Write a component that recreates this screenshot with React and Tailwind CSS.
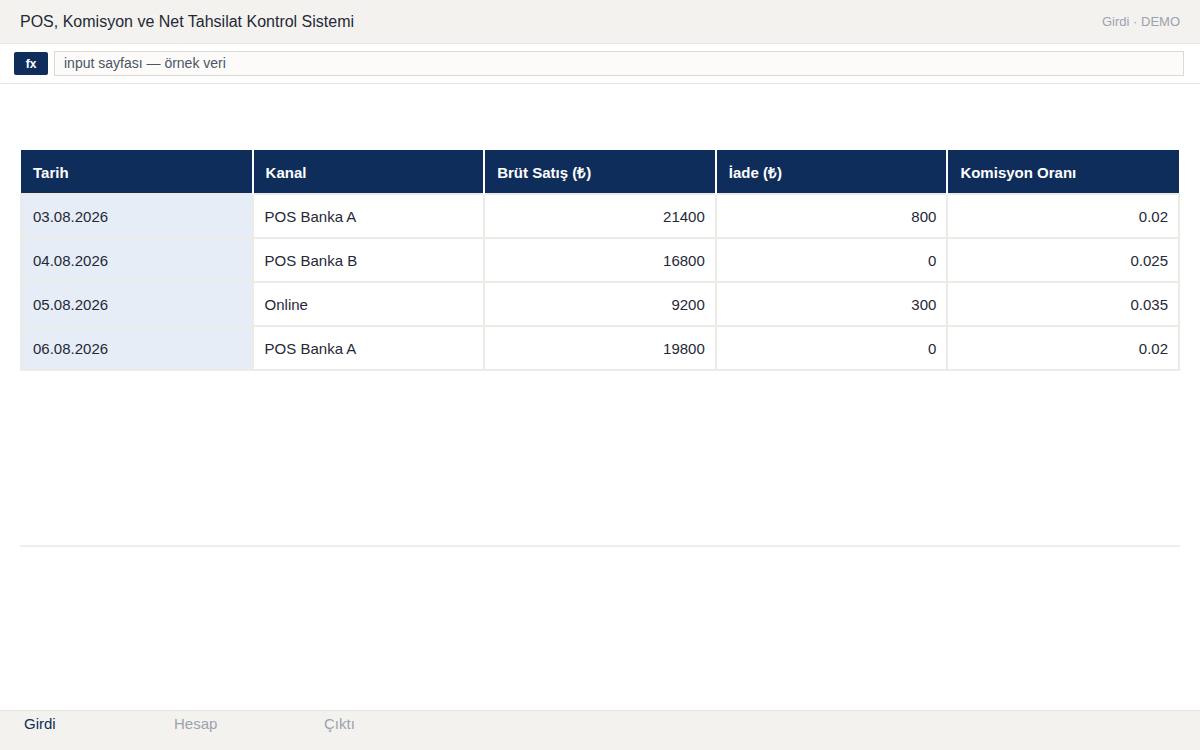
import React from 'react';

const rows = [
  { tarih: '03.08.2026', kanal: 'POS Banka A', brut: '21400', iade: '800', oran: '0.02' },
  { tarih: '04.08.2026', kanal: 'POS Banka B', brut: '16800', iade: '0', oran: '0.025' },
  { tarih: '05.08.2026', kanal: 'Online', brut: '9200', iade: '300', oran: '0.035' },
  { tarih: '06.08.2026', kanal: 'POS Banka A', brut: '19800', iade: '0', oran: '0.02' },
];

const headers = ['Tarih', 'Kanal', 'Brüt Satış (₺)', 'İade (₺)', 'Komisyon Oranı'];

const App = () => {
  return (
    <div className="h-screen w-full flex flex-col bg-white text-[#1f2937]" style={{ fontFamily: '"Liberation Sans", Arial, sans-serif' }}>
      {/* title bar */}
      <div className="h-[44px] flex items-center justify-between px-5 bg-[#f3f2ee] border-b border-[#e6e4de]">
        <h1 className="text-[16px] text-[#1f2937]">POS, Komisyon ve Net Tahsilat Kontrol Sistemi</h1>
        <span className="text-[13px] text-[#9ca3af]">Girdi · DEMO</span>
      </div>

      {/* formula bar */}
      <div className="h-[40px] flex items-center gap-[6px] pl-[14px] pr-4 border-b border-[#e6e4de]">
        <div className="w-[34px] h-[23px] bg-[#0f2d5a] rounded-[2px] flex items-center justify-center text-white text-[12px] font-bold">fx</div>
        <div className="flex-1 h-[25px] flex items-center px-[9px] bg-[#fcfbf9] border border-[#dcd9d2] text-[14px] text-[#4b5563]">
          input sayfası — örnek veri
        </div>
      </div>

      <div className="flex-1 px-5 pt-[66px] flex flex-col">
        <table className="w-full border-collapse table-fixed text-[15px]">
          <thead>
            <tr className="h-[44px] bg-[#0f2d5a] text-white">
              {headers.map((h, i) => (
                <th key={h} className={`text-left font-bold px-3 pt-[4px] ${i > 0 ? 'border-l-2 border-white' : ''}`}>{h}</th>
              ))}
            </tr>
          </thead>
          <tbody>
            {rows.map((r, i) => (
              <tr key={i} className="h-[44px]">
                <td className="pl-[11px] pr-3 pt-[2px] bg-[#e6edf7] border-2 border-[#ecebe6]">{r.tarih}</td>
                <td className="pl-[11px] pr-3 pt-[2px] border-2 border-[#ecebe6]">{r.kanal}</td>
                <td className="pl-3 pr-[10px] pt-[2px] text-right border-2 border-[#ecebe6]">{r.brut}</td>
                <td className="pl-3 pr-[10px] pt-[2px] text-right border-2 border-[#ecebe6]">{r.iade}</td>
                <td className="pl-3 pr-[10px] pt-[2px] text-right border-2 border-[#ecebe6]">{r.oran}</td>
              </tr>
            ))}
          </tbody>
        </table>
        <div className="mt-[174px] h-[2px] bg-[#efeeea]" />
      </div>

      {/* bottom tabs */}
      <div className="h-[40px] flex bg-[#f3f2ee] border-t border-[#e6e4de]">
        <div className="w-[150px] pl-6 pt-[5px] leading-[16px] text-[15px] text-[#0f2d5a]">Girdi</div>
        <div className="w-[150px] pl-6 pt-[5px] leading-[16px] text-[15px] text-[#9ca3af]">Hesap</div>
        <div className="w-[150px] pl-6 pt-[5px] leading-[16px] text-[15px] text-[#9ca3af]">Çıktı</div>
      </div>
    </div>
  );
};

export default App;
